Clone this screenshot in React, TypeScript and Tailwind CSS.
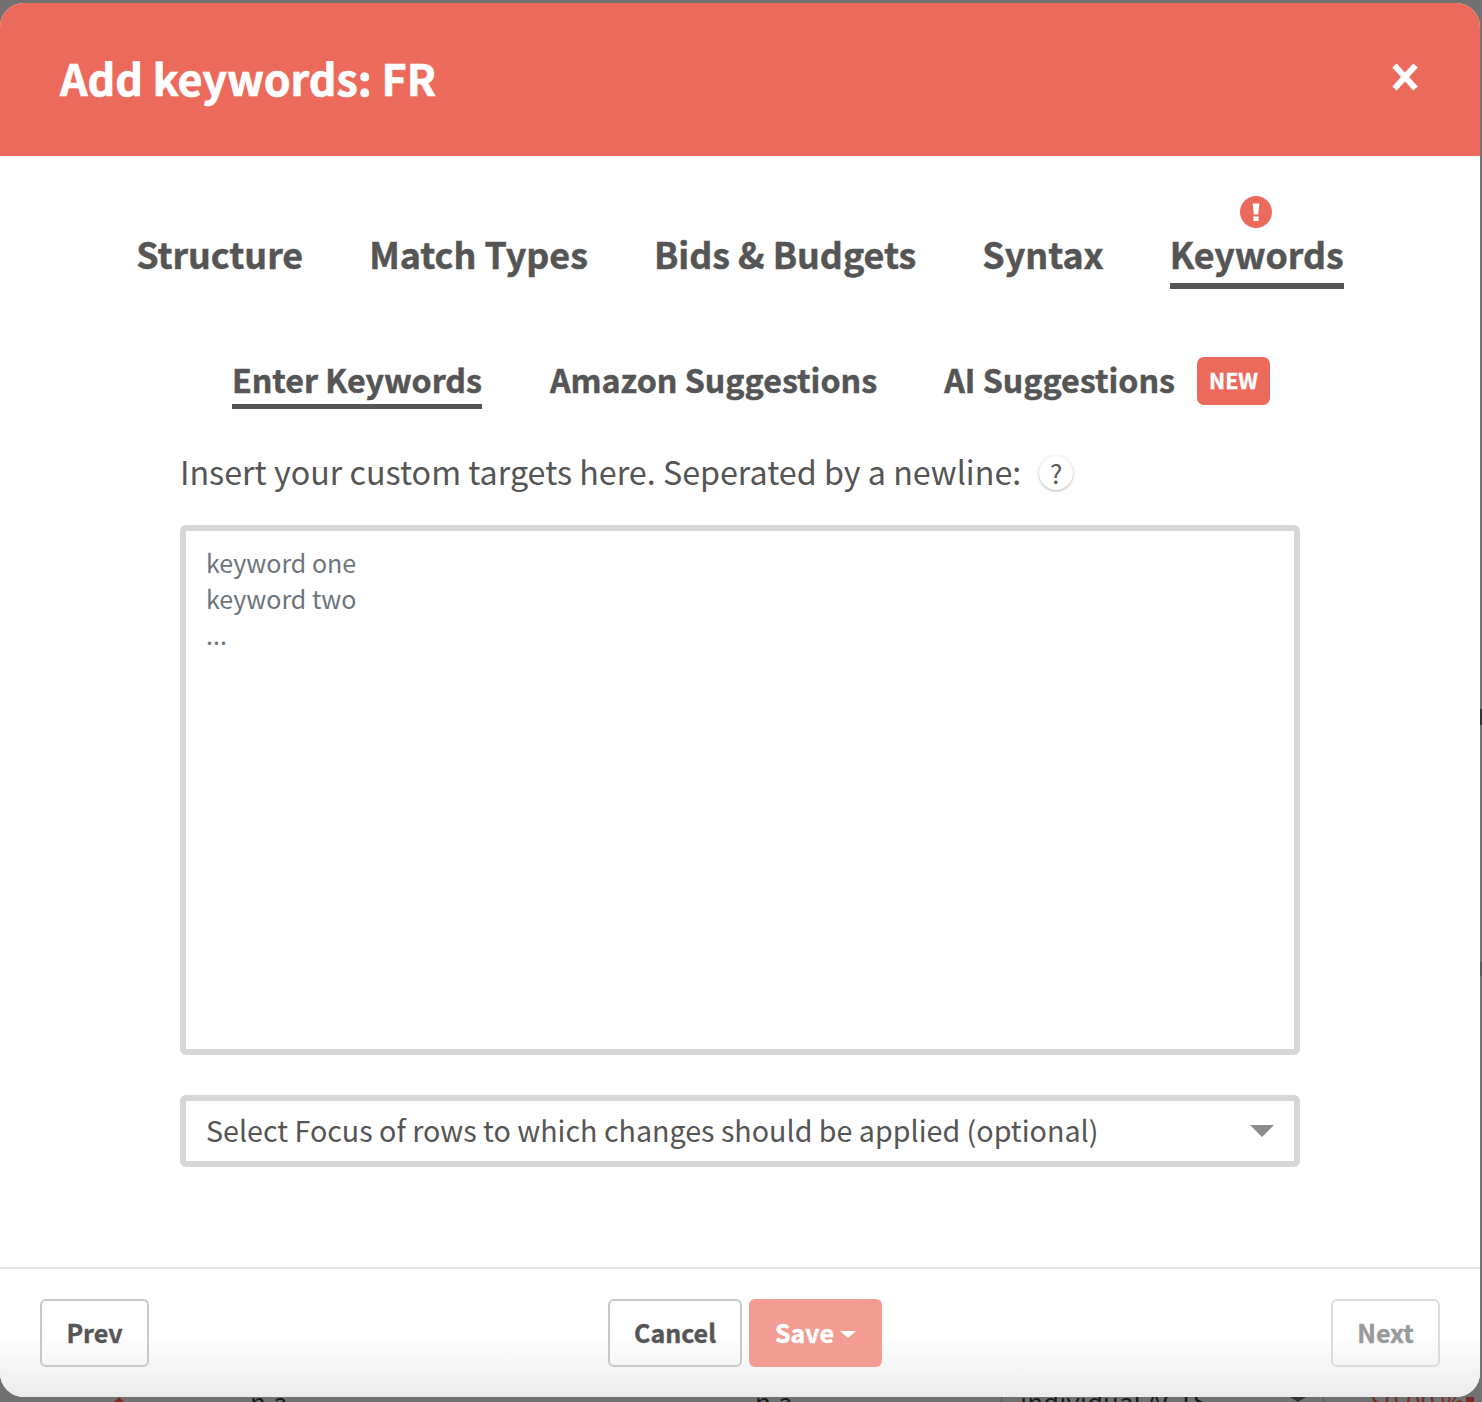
export default function App() {
  const tabs = ["Structure", "Match Types", "Bids & Budgets", "Syntax"];
  return (
    <div className="relative h-[1402px] w-[1482px] overflow-hidden bg-[#717171] pt-[3px] font-['Noto_Sans_CJK_SC','Source_Sans_Pro',sans-serif] text-[#555555]">
      <span className="absolute right-0 top-[709px] h-[16px] w-[2px] bg-[#333333]" />
      <span className="absolute right-0 top-[962px] h-[14px] w-[2px] bg-[#5a5a5a]" />
      <div className="flex h-[1394px] w-[1480px] flex-col overflow-hidden rounded-[24px] bg-white">
        <header className="flex h-[153px] shrink-0 items-center justify-between bg-[#ec6a5c] pl-[60px] pr-[62px]">
          <h1 className="mb-[6px] text-[43px] leading-[54px] font-bold text-white [-webkit-text-stroke:0.7px_#ffffff]">Add keywords: FR</h1>
          <svg width="26" height="28" viewBox="0 0 26 28" className="mb-[6px]">
            <path d="M2.5 2.5 L23.5 25.5 M23.5 2.5 L2.5 25.5" stroke="#fff" strokeWidth="6" />
          </svg>
        </header>

        <main className="flex flex-1 flex-col">
          <nav className="mt-[40px] flex h-[93px] items-end justify-center gap-[66px]">
            {tabs.map((t) => (
              <span key={t} className="pb-[13.5px] text-[35.8px] leading-[46px] font-bold [-webkit-text-stroke:0.5px_#555555]">{t}</span>
            ))}
            <span className="relative border-b-[6px] border-[#555555] pb-[7.5px] text-[35.8px] leading-[46px] font-bold [-webkit-text-stroke:0.5px_#555555]">
              Keywords
              <svg width="32" height="32" viewBox="0 0 32 32" className="absolute -top-[34px] left-1/2 -ml-[17px]">
                <circle cx="16" cy="16" r="16" fill="#ec6a5c" />
                <path d="M12.6 7.5h6.8l-1.2 11h-4.4z" fill="#fff" />
                <rect x="13.4" y="20.4" width="5.2" height="4.6" fill="#fff" />
              </svg>
            </span>
          </nav>

          <nav className="mt-[68px] flex h-[48px] items-start justify-center pl-[22px]">
            <span className="mr-[68px] border-b-[5px] border-[#555555] pb-[3px] text-[32.2px] leading-[44px] font-bold [-webkit-text-stroke:0.5px_#555555]">Enter Keywords</span>
            <span className="mr-[67px] text-[32.2px] leading-[44px] font-bold [-webkit-text-stroke:0.5px_#555555]">Amazon Suggestions</span>
            <span className="mr-[22px] text-[32.2px] leading-[44px] font-bold [-webkit-text-stroke:0.5px_#555555]">AI Suggestions</span>
            <span className="flex h-[48px] w-[73px] items-center justify-center rounded-[7px] bg-[#ec6a5c] pb-[3px] text-[21.5px] leading-[30px] font-bold text-white [-webkit-text-stroke:0.4px_#ffffff]">NEW</span>
          </nav>

          <div className="mx-[180px] mt-[44px] flex h-[48px] items-center">
            <span className="pb-[4px] text-[32.25px] leading-[44px]">Insert your custom targets here. Seperated by a newline:</span>
            <span className="ml-[18px] flex h-[34px] w-[34px] items-center justify-center rounded-full bg-white text-[26px] leading-[30px] shadow-[0_1px_3px_rgba(0,0,0,0.3)]">?</span>
          </div>

          <textarea
            readOnly
            className="mx-[180px] mt-[28px] block h-[530px] w-[1120px] shrink-0 resize-none rounded-[6px] border-[6px] border-[#d6d6d6] bg-white px-[20px] py-[13px] text-[25px] leading-[36px] outline-none placeholder:text-[#6c757d]"
            placeholder={"keyword one\nkeyword two\n..."}
          />

          <div className="relative mx-[180px] mt-[40px] flex h-[72px] w-[1120px] shrink-0 items-center rounded-[6px] border-[6px] border-[#d6d6d6] bg-white pl-[20px] text-[28.66px] leading-[40px]">
            <span className="pb-[2px]">Select Focus of rows to which changes should be applied (optional)</span>
            <span className="absolute right-[20px] top-[24px] h-0 w-0 border-x-[12px] border-t-[12px] border-x-transparent border-t-[#8c8c8c]" />
          </div>
        </main>

        <footer className="flex h-[130px] shrink-0 items-start justify-between border-t-2 border-[#e6e6e6] bg-gradient-to-b from-white from-50% to-[#ececec] pl-[40px] pr-[40px] pt-[30px]">
          <button className="h-[68px] w-[109px] rounded-[6px] border-2 border-[#c8c8c8] pb-[2px] text-[25px] leading-[36px] font-bold [-webkit-text-stroke:0.4px_#555555]">Prev</button>
          <div className="ml-[10px] flex gap-[7px]">
            <button className="h-[68px] w-[134px] rounded-[6px] border-2 border-[#c8c8c8] pb-[2px] text-[25px] leading-[36px] font-bold [-webkit-text-stroke:0.4px_#555555]">Cancel</button>
            <button className="flex h-[68px] w-[133px] items-center justify-center gap-[6px] rounded-[6px] bg-[#f29c94] pb-[2px] text-[25px] leading-[36px] font-bold text-white [-webkit-text-stroke:0.4px_#ffffff]">
              Save
              <span className="mt-[4px] h-0 w-0 border-x-[8px] border-t-[7px] border-x-transparent border-t-white" />
            </button>
          </div>
          <button className="h-[68px] w-[109px] rounded-[6px] border-2 border-[#dcdcdc] pb-[2px] text-[25px] leading-[36px] font-bold text-[#999999] [-webkit-text-stroke:0.4px_#999999]">Next</button>
        </footer>
      </div>

      <div className="flex h-[5px] items-start overflow-hidden text-[26px] leading-[30px] text-[#1a1a1a]">
        <span className="ml-[112px] h-0 w-0 border-x-[7px] border-b-[7px] border-x-transparent border-b-[#7a2b25]" />
        <span className="ml-[124px] -mt-[11px] w-[35px]">n.a</span>
        <span className="ml-[470px] -mt-[11px] w-[35px]">n.a</span>
        <span className="ml-[211px] h-[5px] w-[1px] bg-[#555555]" />
        <span className="ml-[18px] -mt-[11px] w-[270px]">individual ACTS</span>
        <span className="h-0 w-0 border-x-[8px] border-t-[5px] border-x-transparent border-t-[#333333]" />
        <span className="ml-[17px] h-[5px] w-[1px] bg-[#555555]" />
        <span className="ml-[46px] -mt-[11px] w-[96px] text-[#7a2b25]">$0.00 %</span>
        <span className="h-[5px] w-[8px] bg-[#7a2b25]" />
      </div>
    </div>
  );
}
